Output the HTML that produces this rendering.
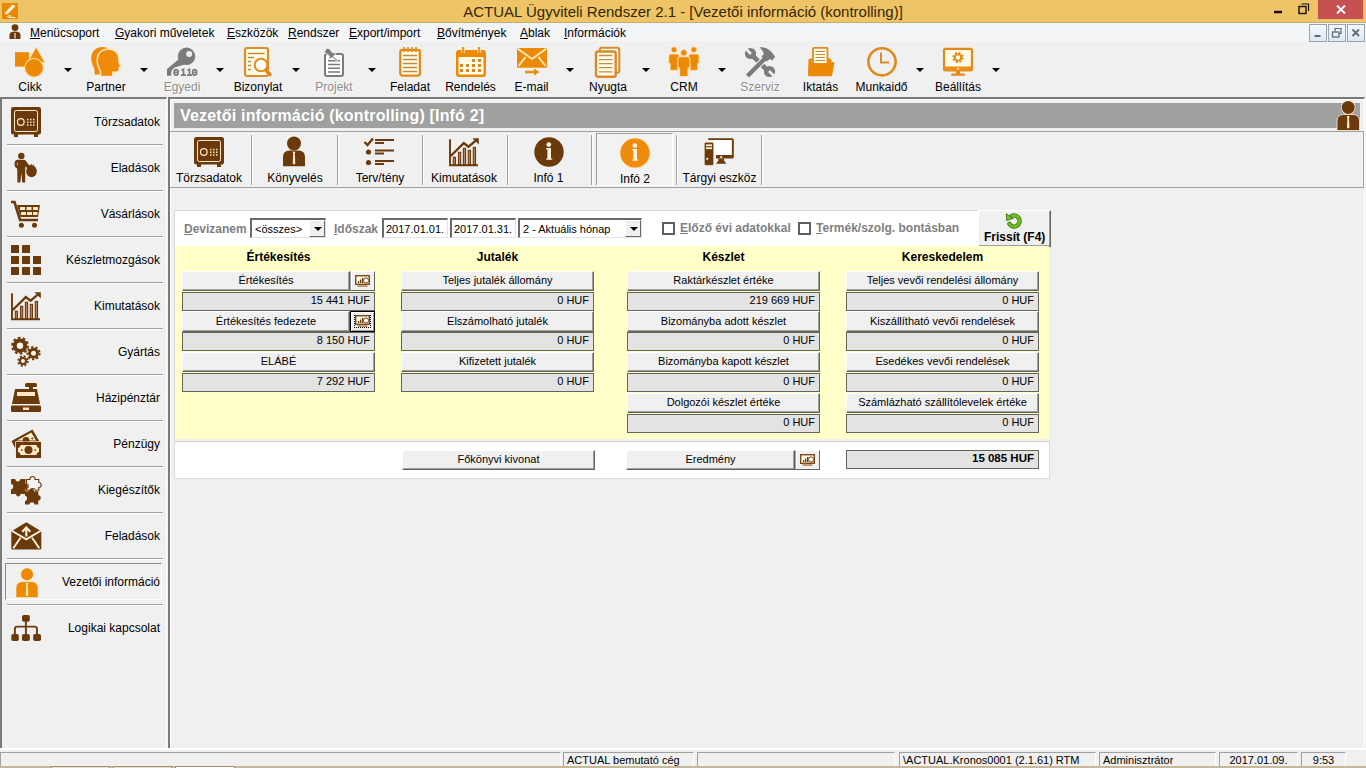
<!DOCTYPE html>
<html><head><meta charset="utf-8">
<style>
*{margin:0;padding:0;box-sizing:border-box}
html,body{width:1366px;height:768px;overflow:hidden;background:#f0f0f0;font-family:"Liberation Sans",sans-serif;color:#000}
.a{position:absolute}
#title{left:0;top:0;width:1366px;height:22px;background:#efc466}
#ttext{left:0;top:3px;width:1366px;text-align:center;font-size:15px;color:#33260a;white-space:nowrap}
#menubar{left:0;top:22px;width:1366px;height:20px;background:linear-gradient(#f1f4f6,#f5f6f7);border-top:1px solid #c4ad72;border-bottom:1px solid #e4e5e7}
.mi{top:26px;font-size:12px;white-space:nowrap}
.mi u{text-decoration:underline}
#toolbar{left:0;top:41px;width:1366px;height:56px;background:#f0f0f0}
.tl{top:80px;font-size:12px;white-space:nowrap;text-align:center}
.dd{width:0;height:0;border-left:4px solid transparent;border-right:4px solid transparent;border-top:4px solid #000}
#side{left:0;top:97px;width:167px;height:651px;background:#f0f0f0;border-top:2px solid #7a7a7a;border-left:2px solid #7a7a7a;border-right:1px solid #fff}
.sl{font-size:12px;white-space:nowrap;text-align:right}
.sep{height:2px;background:#a0a0a0;border-bottom:1px solid #fff}
#mdi{left:168px;top:97px;width:1197px;border-right:1px solid #fff;height:651px;background:#f0f0f0;border-top:2px solid #7a7a7a;border-left:2px solid #7a7a7a}
#status{left:0;top:750px;width:1366px;height:18px;background:#f0f0f0}
.sp{top:752px;height:16px;border:1px solid #a0a0a0;border-right-color:#fff;border-bottom-color:#fff;font-size:11px;white-space:nowrap;padding-left:3px;line-height:15px}
.flab{font-size:12px;font-weight:bold;color:#7f7f7f;white-space:nowrap}
.combo{background:#fff;border-top:2px solid #696969;border-left:2px solid #696969;border-right:1px solid #e3e3e3;border-bottom:1px solid #e3e3e3;font-size:11px;white-space:nowrap;overflow:hidden}
.cbtn{position:absolute;right:0;top:0;width:16px;height:17px;background:#f0f0f0;border-right:1px solid #696969;border-bottom:1px solid #696969;border-top:1px solid #fff;border-left:1px solid #fff}
.chk{width:13px;height:13px;border:2px solid #5e5e5e;background:#fff}
.fhd{font-size:12px;font-weight:bold;text-align:center;white-space:nowrap}
.btn{height:20px;background:#f0f0f0;border-top:1px solid #fff;border-left:1px solid #fff;border-right:1px solid #646458;border-bottom:1px solid #646458;box-shadow:inset -1px -1px 0 #a0a0a0;font-size:11px;text-align:center;line-height:17px;white-space:nowrap}
.cbt{border-left:1px solid #a0a0a0;box-shadow:inset 1px 0 0 #fff}
.sel{border:1px solid #000;box-shadow:inset 1px 1px 0 #fff,inset -1px -1px 0 #a0a0a0}
.fld{height:19px;background:#e3e3e3;border:1px solid #646458;font-size:11px;text-align:right;padding-right:4px;line-height:15px;white-space:nowrap}
.mdib{z-index:5;width:18px;height:18px;border:1px solid #9aa4ae;background:linear-gradient(#f4f8fc,#dde8f4)}
.br{color:#6e3c0c}
</style></head><body>
<!-- title bar -->
<div class="a" id="title"></div>
<div class="a" id="ttext">ACTUAL Ügyviteli Rendszer 2.1 - [Vezetői információ (kontrolling)]</div>
<div class="a" style="left:1318px;top:0;width:45px;height:19px;background:#c75050"></div>

<!-- menu bar -->
<svg class="a" style="left:2px;top:3px" width="16" height="16" viewBox="0 0 16 16">
 <rect width="16" height="16" fill="#e98806"/>
 <path d="M2.3 10.6 L10.5 1.5 L12.8 2.5 L13 3.8 L5 11.5Z" fill="#fff6d8"/>
 <path d="M5 13.8 Q8 11.5 9 13 Q8.5 14.5 6.5 14 M6.5 14.5 H13.5" fill="none" stroke="#fff0c0" stroke-width="1"/>
</svg>
<svg class="a" style="left:1274px;top:10px" width="9" height="4"><rect width="8" height="2.5" y="0.8" fill="#111"/></svg>
<svg class="a" style="left:1298px;top:3px" width="12" height="12" viewBox="0 0 12 12"><path d="M3.5 1 H10.5 V8" fill="none" stroke="#111" stroke-width="1.2"/><rect x="1" y="3.5" width="7" height="7" fill="none" stroke="#111" stroke-width="1.4"/></svg>
<svg class="a" style="left:1336px;top:5px" width="10" height="9" viewBox="0 0 10 9"><path d="M1 0.5 L9 8.5 M9 0.5 L1 8.5" stroke="#fff" stroke-width="1.9"/></svg>

<div class="a" id="menubar"></div>
<svg class="a" style="left:9px;top:24px" width="12" height="16" viewBox="0 0 12 16">
 <circle cx="6" cy="3.6" r="3.4" fill="#6b3a0c"/>
 <path d="M0.5 15 V11 C0.5 8.5 2.5 7.5 6 7.5 C9.5 7.5 11.5 8.5 11.5 11 V15Z" fill="#6b3a0c"/>
 <rect x="5.4" y="9" width="1.2" height="5.5" fill="#f5e8d0"/>
</svg>
<div class="a mdib" style="left:1309px;top:24px"><svg width="16" height="16" style="position:absolute;left:0;top:0"><rect x="4.5" y="10" width="6" height="2" fill="#5f6b78"/></svg></div>
<div class="a mdib" style="left:1328px;top:24px"><svg width="16" height="16" style="position:absolute;left:0;top:0"><path d="M6 6.5 V3.5 H12 V8.5 H10" fill="none" stroke="#5f6b78" stroke-width="1.2"/><rect x="3.5" y="7" width="6.5" height="5" fill="none" stroke="#5f6b78" stroke-width="1.3"/></svg></div>
<div class="a mdib" style="left:1347px;top:24px"><svg width="16" height="16" style="position:absolute;left:0;top:0"><path d="M4.5 4.5 L11 11 M11 4.5 L4.5 11" stroke="#5f6b78" stroke-width="1.8"/></svg></div>
<div class="a mi" style="left:30px"><u>M</u>enücsoport</div>
<div class="a mi" style="left:115px"><u>G</u>yakori műveletek</div>
<div class="a mi" style="left:227px"><u>E</u>szközök</div>
<div class="a mi" style="left:288px"><u>R</u>endszer</div>
<div class="a mi" style="left:349px"><u>E</u>xport/import</div>
<div class="a mi" style="left:437px"><u>B</u>ővítmények</div>
<div class="a mi" style="left:520px"><u>A</u>blak</div>
<div class="a mi" style="left:564px"><u>I</u>nformációk</div>

<!-- toolbar -->
<div class="a" id="toolbar"></div>


<!-- toolbar icons -->
<svg class="a" style="left:15px;top:47px;overflow:visible" width="30" height="30" viewBox="0 0 30 30">
 <rect x="0" y="5.2" width="14" height="14.5" fill="#ec8a08"/>
 <path d="M21 0 L30 15.5 L11.5 17.5 Z" fill="#ec8a08" stroke="#ffe3a6" stroke-width="1"/>
 <circle cx="19" cy="20.9" r="9.8" fill="#ffe3a6"/>
 <circle cx="19" cy="20.9" r="8.8" fill="#ec8a08"/>
</svg>
<div class="a dd" style="left:64px;top:68px"></div>
<div class="a tl" style="left:0;width:60px">Cikk</div>

<svg class="a" style="left:91px;top:47px;overflow:visible" width="31" height="31" viewBox="0 0 31 31">
 <path d="M9.5 29.6 L9.5 24 C7.5 21 6.2 17 6.2 12.5 C6.5 6 11 1.9 17.5 1.9 C24 1.9 28 6.5 28 12 C28 14 27.8 15.5 28.3 16.5 L29.9 19 L28.3 20.3 L28.3 22.5 C28 24.5 27 25.2 24.5 25.2 L21.7 25.2 L21.7 29.6 Z" fill="#ef8a0c" transform="translate(-6,-2)"/>
 <path d="M9.5 29.6 L9.5 24 C7.5 21 6.2 17 6.2 12.5 C6.5 6 11 1.9 17.5 1.9 C24 1.9 28 6.5 28 12 C28 14 27.8 15.5 28.3 16.5 L29.9 19 L28.3 20.3 L28.3 22.5 C28 24.5 27 25.2 24.5 25.2 L21.7 25.2 L21.7 29.6 Z" fill="#ef8a0c" stroke="#ffe8b8" stroke-width="1.5"/>
 <path d="M9 29.6 H22.5 V31 H9Z" fill="#f0f0f0"/>
</svg>
<div class="a dd" style="left:140px;top:68px"></div>
<div class="a tl" style="left:76px;width:60px">Partner</div>

<svg class="a" style="left:164px;top:44px" width="40" height="36" viewBox="0 0 40 36">
 <circle cx="22.5" cy="12.3" r="8.7" fill="#7b7b7b"/>
 <circle cx="25.2" cy="9.9" r="3" fill="#f0f0f0"/>
 <path d="M15 15 L3 25 L3 31.8 L7 31.8 L7.5 26.5 L10.5 23.5 L20.5 20.5Z" fill="#7b7b7b"/>
 <g fill="none" stroke="#7b7b7b" stroke-width="1.7">
  <rect x="10.2" y="25.7" width="3.8" height="5.4" rx="1.9"/>
  <rect x="28.7" y="25.7" width="3.8" height="5.4" rx="1.9"/>
  <path d="M11 28.4 H13.2 M29.5 28.4 H31.7"/>
  <path d="M17.5 26.2 L19.5 25.3 V31.8 M17 31.2 H22 M23.5 26.2 L25.5 25.3 V31.8 M23 31.2 H28"/>
 </g>
</svg>
<div class="a dd" style="left:216px;top:68px"></div>
<div class="a tl" style="left:152px;width:60px;color:#8d8d8d;text-shadow:1px 1px 0 #fff">Egyedi</div>

<svg class="a" style="left:243px;top:46px" width="30" height="31" viewBox="0 0 30 31">
 <rect x="2" y="2" width="23" height="28" rx="2" fill="#fffbe6" stroke="#d9902c" stroke-width="2.2"/>
 <path d="M5 7.5 H21.5 M5 11.5 H11 M5 15.5 H8 M5 19.5 H8 M5 23.5 H8" stroke="#c08a3a" stroke-width="1.5"/>
 <circle cx="18" cy="19" r="6.3" fill="#fffef8" stroke="#e08d20" stroke-width="2"/>
 <path d="M22 23.5 L28 29.5" stroke="#e8870e" stroke-width="3.2"/>
</svg>
<div class="a dd" style="left:292px;top:68px"></div>
<div class="a tl" style="left:228px;width:60px">Bizonylat</div>

<svg class="a" style="left:319px;top:47px" width="30" height="30" viewBox="0 0 30 30">
 <rect x="6" y="7" width="18" height="22" rx="2" fill="#fff" stroke="#7b7b7b" stroke-width="2"/>
 <path d="M9 13.8 H21 M9 17.5 H21 M9 21.3 H21 M9 25 H21" stroke="#7b7b7b" stroke-width="1.4"/>
 <path d="M5 5 L8 1 L10.5 2 L14 6 L17.5 5.5 L14.5 9.5 L19 13 L17.5 14 L13.5 10.5 L10 12.5 L10.5 9 L6.5 6Z" fill="#7b7b7b" stroke="#f0f0f0" stroke-width="0.9"/>
</svg>
<div class="a dd" style="left:368px;top:68px"></div>
<div class="a tl" style="left:304px;width:60px;color:#8d8d8d;text-shadow:1px 1px 0 #fff">Projekt</div>

<svg class="a" style="left:398px;top:46px" width="24" height="31" viewBox="0 0 24 31">
 <rect x="2.3" y="4" width="19.6" height="25.6" rx="2" fill="#fffbe6" stroke="#e08a1c" stroke-width="2.3"/>
 <path d="M6 1 V6 M10 1 V6 M14 1 V6 M18 1 V6" stroke="#e8901a" stroke-width="1.6"/>
 <path d="M5 9.5 H19 M5 13.5 H19 M5 17.5 H19 M5 21.5 H19 M5 25.5 H19" stroke="#c48a3e" stroke-width="1.4"/>
</svg>
<div class="a tl" style="left:380px;width:60px">Feladat</div>

<svg class="a" style="left:456px;top:47px" width="30" height="30" viewBox="0 0 30 30">
 <rect x="0" y="3" width="30" height="27" rx="3" fill="#ec8a08"/>
 <rect x="2.5" y="10" width="25" height="17.5" rx="1" fill="#fffbe6"/>
 <path d="M7 0 V6 M23 0 V6" stroke="#ffe3b0" stroke-width="3.6"/>
 <path d="M7 0 V6 M23 0 V6" stroke="#e8901a" stroke-width="1.8"/>
 <g fill="#d88a2a"><rect x="16" y="12" width="3" height="3"/><rect x="22" y="12" width="3" height="3"/>
 <rect x="4" y="17" width="3" height="3"/><rect x="10" y="17" width="3" height="3"/><rect x="16" y="17" width="3" height="3"/><rect x="22" y="17" width="3" height="3"/>
 <rect x="4" y="22" width="3" height="3"/><rect x="10" y="22" width="3" height="3"/><rect x="16" y="22" width="3" height="3"/><rect x="22" y="22" width="3" height="3"/></g>
</svg>
<div class="a tl" style="left:440px;width:61px">Rendelés</div>

<svg class="a" style="left:516px;top:47px" width="32" height="30" viewBox="0 0 32 30">
 <rect x="1" y="1" width="30" height="19.7" rx="1.2" fill="#ec8a08"/>
 <path d="M1.8 1.8 L16 12 L30.2 1.8 M2.5 19 L9.5 10 M29.5 19 L22.5 10" stroke="#fff0c8" stroke-width="1.7" fill="none"/>
 <path d="M9 25 H19" stroke="#e8901a" stroke-width="2.6"/>
 <path d="M18 21.5 L23.5 25 L18 28.5Z" fill="#e8901a"/>
</svg>
<div class="a dd" style="left:566px;top:68px"></div>
<div class="a tl" style="left:501px;width:61px">E-mail</div>

<svg class="a" style="left:594px;top:46px" width="28" height="32" viewBox="0 0 28 32">
 <rect x="5.8" y="1.8" width="19.5" height="25" rx="2" fill="#fffbe6" stroke="#d98a2c" stroke-width="2"/>
 <rect x="2" y="5.5" width="19.7" height="25.3" rx="2" fill="#fffbe6" stroke="#d98a2c" stroke-width="2.4"/>
 <path d="M5 9.5 H18.5 M5 13.7 H18.5 M5 17.7 H18.5 M5 21.7 H18.5 M5 25.8 H18.5" stroke="#c0904a" stroke-width="1.3"/>
</svg>
<div class="a dd" style="left:642px;top:68px"></div>
<div class="a tl" style="left:578px;width:60px">Nyugta</div>

<svg class="a" style="left:668px;top:46px;overflow:visible" width="32" height="32" viewBox="0 0 32 32">
 <g fill="#ec8a08" stroke="#ffe3b0" stroke-width="0.8">
 <circle cx="6" cy="3.7" r="2.9"/><circle cx="25.8" cy="3.7" r="2.9"/>
 <path d="M0.8 10 Q0.8 8 3 8 H9 Q11.2 8 11.2 10 V17.5 H9.8 V24.3 H2.2 V17.5 H0.8Z"/>
 <path d="M20.6 10 Q20.6 8 22.8 8 H28.8 Q31 8 31 10 V17.5 H29.6 V24.3 H22 V17.5 H20.6Z"/>
 <circle cx="15.8" cy="6.8" r="3.2"/>
 <path d="M9.8 12.8 Q9.8 10.7 12 10.7 H19.6 Q21.8 10.7 21.8 12.8 V22 H20 V30.5 H11.6 V22 H9.8Z" stroke-width="1.1"/>
 </g>
</svg>
<div class="a dd" style="left:718px;top:68px"></div>
<div class="a tl" style="left:654px;width:60px">CRM</div>

<svg class="a" style="left:740px;top:44px" width="40" height="36" viewBox="0 0 40 36">
 <g fill="#7b7b7b"><circle cx="10.5" cy="9.5" r="5.6"/><circle cx="29.5" cy="27.5" r="5.6"/></g>
 <path d="M11 10 L29 28" stroke="#7b7b7b" stroke-width="4.6"/>
 <path d="M4 3 L11 10 M36 34 L29 27" stroke="#f0f0f0" stroke-width="2.6"/>
 <path d="M7.5 32 L26 13.5" stroke="#f0f0f0" stroke-width="6.4"/>
 <path d="M7.5 32 L26 13.5" stroke="#7b7b7b" stroke-width="4.4"/>
 <path d="M19.5 3.3 C25 2.5 30.5 5.5 33.5 10.5 L35 12.5 L34 14.5 L32 16.5 L30 15 L26.5 17.5 L21.5 12.5 L24 10 C23 7.5 21.5 5 19.5 3.3Z" fill="#7b7b7b"/>
</svg>
<div class="a tl" style="left:730px;width:60px;color:#8d8d8d;text-shadow:1px 1px 0 #fff">Szerviz</div>

<svg class="a" style="left:807px;top:46px" width="28" height="32" viewBox="0 0 28 32">
 <rect x="6" y="1.8" width="14.5" height="16" rx="1" fill="#fffbe6" stroke="#e08a1c" stroke-width="1.8"/>
 <path d="M8.5 5.5 H18 M8.5 8.5 H18 M8.5 11.5 H18 M8.5 14.5 H18" stroke="#c48a3e" stroke-width="1.2"/>
 <path d="M1.5 14 Q1.5 12.5 3 12.5 H5 V17 H21 V12.5 H23 Q24.5 12.5 24.5 14 V16 H26.5 Q27.5 16 27.3 17.5 L25.3 28.8 Q25 30.3 23.5 30.3 H2.5 Q1 30.3 1 28.8Z" fill="#ec8a08"/>
</svg>
<div class="a tl" style="left:790px;width:61px">Iktatás</div>

<svg class="a" style="left:866px;top:46px" width="32" height="32" viewBox="0 0 32 32">
 <circle cx="16" cy="15.8" r="13.6" fill="none" stroke="#e08a1c" stroke-width="2.6"/>
 <path d="M15 6.5 V16.5 H23" stroke="#d98a2c" stroke-width="2" fill="none"/>
</svg>
<div class="a dd" style="left:916px;top:68px"></div>
<div class="a tl" style="left:851px;width:61px">Munkaidő</div>

<svg class="a" style="left:942px;top:47px" width="32" height="30" viewBox="0 0 32 30">
 <rect x="2" y="1.8" width="28" height="21.5" rx="1.5" fill="#fffbe6" stroke="#e08a1c" stroke-width="2.2"/>
 <rect x="1" y="19.5" width="30" height="4.5" rx="1" fill="#e8901a"/>
 <rect x="15" y="21" width="2" height="1.3" fill="#fffbe6"/>
 <rect x="14" y="24" width="4" height="3" fill="#e08a1c"/>
 <rect x="9" y="26.5" width="14" height="2.2" rx="1" fill="#e08a1c"/>
 <circle cx="16" cy="10.5" r="4.3" fill="none" stroke="#e08a1c" stroke-width="2.6" stroke-dasharray="1.9 1.48"/>
 <circle cx="16" cy="10.5" r="3.1" fill="none" stroke="#e08a1c" stroke-width="1.7"/>
</svg>
<div class="a dd" style="left:992px;top:68px"></div>
<div class="a tl" style="left:928px;width:60px">Beállítás</div>

<!-- sidebar -->
<div class="a" id="side"></div>


<!-- sidebar items -->
<div class="a" style="left:5px;top:563px;width:157px;height:37px;border-top:1px solid #8a8a8a;border-left:1px solid #8a8a8a;border-right:1px solid #fff;border-bottom:1px solid #fff;background:repeating-conic-gradient(#f7f7f7 0 25%,#ebebeb 0 50%) 0 0/2px 2px"></div>
<svg class="a" style="left:11px;top:107px;overflow:visible" width="31" height="31" viewBox="0 0 31 31"><rect x="0" y="0" width="30" height="27.5" rx="2.2" fill="#6b3a0c"/><rect x="3.5" y="3.5" width="23" height="21" rx="1.8" fill="none" stroke="#ffe9c8" stroke-width="1"/>
<circle cx="9.8" cy="15" r="3.3" fill="none" stroke="#ffe9c8" stroke-width="1.2"/>
<g fill="#ffe9c8"><rect x="16" y="11.8" width="1.5" height="1.5"/><rect x="19" y="11.8" width="1.5" height="1.5"/><rect x="22" y="11.8" width="1.5" height="1.5"/><rect x="16" y="14.5" width="1.5" height="1.5"/><rect x="19" y="14.5" width="1.5" height="1.5"/><rect x="22" y="14.5" width="1.5" height="1.5"/><rect x="16" y="17.2" width="1.5" height="1.5"/><rect x="19" y="17.2" width="1.5" height="1.5"/><rect x="22" y="17.2" width="1.5" height="1.5"/></g>
<rect x="3" y="27" width="4" height="3" fill="#6b3a0c"/><rect x="23" y="27" width="4" height="3" fill="#6b3a0c"/></svg>
<div class="a sl" style="right:1206px;top:115px">Törzsadatok</div>
<div class="a sep" style="left:7px;top:144px;width:156px"></div>
<svg class="a" style="left:11px;top:153px;overflow:visible" width="31" height="31" viewBox="0 0 31 31"><circle cx="10.3" cy="2.9" r="3.2" fill="#6b3a0c"/>
<path d="M6.5 6.8 Q3.8 7 3.6 10 L3.6 12.5 Q3.8 14.3 6.2 15.8 L6.4 29.6 H9.4 L10.3 19.5 L11.2 29.6 H14.2 L14.3 13.5 L17 15.5 L18.8 13.5 L15 8 Q14 6.8 12.5 6.8Z" fill="#6b3a0c"/>
<path d="M5.6 10.3 L6.6 10 L6.6 13.2Z" fill="#f0f0f0"/>
<ellipse cx="20.5" cy="18.3" rx="5.3" ry="6" fill="#6b3a0c"/>
<path d="M17.8 10.8 L19 13 L20.3 10.8 L21.5 13 L23 10.8 L22.5 14 H18.3Z" fill="#6b3a0c"/></svg>
<div class="a sl" style="right:1206px;top:161px">Eladások</div>
<div class="a sep" style="left:7px;top:190px;width:156px"></div>
<svg class="a" style="left:11px;top:199px;overflow:visible" width="31" height="31" viewBox="0 0 31 31"><path d="M0 3 H3.5 L9 21 H27" fill="none" stroke="#6b3a0c" stroke-width="2.6"/>
<path d="M6 6 H29 L27 18 H9.5Z" fill="#6b3a0c"/>
<g fill="#ffe9c8"><rect x="9" y="8" width="5" height="3"/><rect x="15.5" y="8" width="5" height="3"/><rect x="22" y="8" width="5" height="3"/><rect x="10" y="13" width="5" height="3"/><rect x="16" y="13" width="5" height="3"/><rect x="22" y="13" width="4.5" height="3"/></g>
<circle cx="10.4" cy="26.3" r="2.5" fill="#6b3a0c"/><circle cx="23.5" cy="26.3" r="2.5" fill="#6b3a0c"/></svg>
<div class="a sl" style="right:1206px;top:207px">Vásárlások</div>
<div class="a sep" style="left:7px;top:236px;width:156px"></div>
<svg class="a" style="left:11px;top:245px;overflow:visible" width="31" height="31" viewBox="0 0 31 31"><g fill="#6b3a0c"><rect x="0" y="0" width="8" height="8" rx="0.5"/><rect x="11" y="0" width="8" height="8" rx="0.5"/>
<rect x="0" y="11" width="8" height="8" rx="0.5"/><rect x="11" y="11" width="8" height="8" rx="0.5"/><rect x="22" y="11" width="8" height="8" rx="0.5"/>
<rect x="0" y="22" width="8" height="8" rx="0.5"/><rect x="11" y="22" width="8" height="8" rx="0.5"/><rect x="22" y="22" width="8" height="8" rx="0.5"/></g></svg>
<div class="a sl" style="right:1206px;top:253px">Készletmozgások</div>
<div class="a sep" style="left:7px;top:282px;width:156px"></div>
<svg class="a" style="left:11px;top:292px;overflow:visible" width="31" height="31" viewBox="0 0 31 31"><path d="M1 1.2 V27.2 H29" fill="none" stroke="#6b3a0c" stroke-width="1.9"/>
<path d="M1.7 18 L14.8 5.1 L19.5 8.7 L26.5 2.8" fill="none" stroke="#6b3a0c" stroke-width="2.3"/>
<path d="M23.5 0.2 H29.8 V6.5Z" fill="#6b3a0c"/><rect x="4.3" y="19.2" width="2.2" height="7.4" fill="#b08a64" stroke="#6b3a0c" stroke-width="1.1"/><rect x="9.5" y="14.3" width="2.2" height="12.3" fill="#b08a64" stroke="#6b3a0c" stroke-width="1.1"/><rect x="14.4" y="10.3" width="2.2" height="16.3" fill="#b08a64" stroke="#6b3a0c" stroke-width="1.1"/><rect x="19.3" y="12.4" width="2.2" height="14.2" fill="#b08a64" stroke="#6b3a0c" stroke-width="1.1"/><rect x="24.3" y="9.4" width="2.2" height="17.2" fill="#b08a64" stroke="#6b3a0c" stroke-width="1.1"/></svg>
<div class="a sl" style="right:1206px;top:299px">Kimutatások</div>
<div class="a sep" style="left:7px;top:328px;width:156px"></div>
<svg class="a" style="left:11px;top:337px;overflow:visible" width="31" height="31" viewBox="0 0 31 31"><circle cx="9" cy="8.7" r="7.2" fill="#6b3a0c"/><circle cx="9" cy="8.7" r="7.90" fill="none" stroke="#6b3a0c" stroke-width="2" stroke-dasharray="2.730 2.234"/><circle cx="9" cy="8.7" r="3.2" fill="#f4f0ea"/><circle cx="22.5" cy="16.2" r="5.3999999999999995" fill="#6b3a0c"/><circle cx="22.5" cy="16.2" r="6.10" fill="none" stroke="#6b3a0c" stroke-width="2" stroke-dasharray="2.342 1.916"/><circle cx="22.5" cy="16.2" r="2.5" fill="#f4f0ea"/><circle cx="12" cy="24" r="4.0" fill="#6b3a0c"/><circle cx="12" cy="24" r="4.70" fill="none" stroke="#6b3a0c" stroke-width="2" stroke-dasharray="2.030 1.661"/><circle cx="12" cy="24" r="2" fill="#f4f0ea"/></svg>
<div class="a sl" style="right:1206px;top:345px">Gyártás</div>
<div class="a sep" style="left:7px;top:374px;width:156px"></div>
<svg class="a" style="left:11px;top:383px;overflow:visible" width="31" height="31" viewBox="0 0 31 31"><rect x="14" y="0" width="12" height="4" rx="1.5" fill="#6b3a0c"/><rect x="18" y="3" width="4" height="3" fill="#6b3a0c"/>
<path d="M4 6 H26 L29 21 H1Z" fill="#6b3a0c"/><rect x="6" y="9" width="18" height="4" fill="#ffe9c8"/>
<rect x="0" y="22.5" width="30" height="6.5" rx="1" fill="#6b3a0c"/><rect x="12" y="24.5" width="6" height="2.5" fill="#ffe9c8"/></svg>
<div class="a sl" style="right:1206px;top:391px">Házipénztár</div>
<div class="a sep" style="left:7px;top:420px;width:156px"></div>
<svg class="a" style="left:11px;top:429px;overflow:visible" width="31" height="31" viewBox="0 0 31 31"><path d="M0.5 12 L21.5 0.5 L28.5 12.5 L4.5 12.5 L4.5 20Z" fill="#6b3a0c"/><path d="M6 11.5 L20.3 3.6 L25 11.5Z" fill="#ffe9c8"/><circle cx="15" cy="11.5" r="3.4" fill="#6b3a0c"/><circle cx="21.3" cy="9.5" r="1" fill="#6b3a0c"/>
<rect x="4.5" y="12.5" width="26" height="16.5" fill="#ffe9c8"/>
<rect x="5" y="13" width="25" height="16" fill="#6b3a0c"/>
<path d="M9.5 16 H25.5 C25.5 18 27 19 28 19 V23 C27 23 25.5 24 25.5 26 H9.5 C9.5 24 8 23 7 23 V19 C8 19 9.5 18 9.5 16Z" fill="#ffe9c8"/>
<circle cx="17.5" cy="21" r="4" fill="#6b3a0c"/><rect x="10" y="20.3" width="1.5" height="1.5" fill="#6b3a0c"/><rect x="23.5" y="20.3" width="1.5" height="1.5" fill="#6b3a0c"/></svg>
<div class="a sl" style="right:1206px;top:437px">Pénzügy</div>
<div class="a sep" style="left:7px;top:466px;width:156px"></div>
<svg class="a" style="left:11px;top:475px;overflow:visible" width="31" height="31" viewBox="0 0 31 31"><path d="M0 4 H4.3 C4.3 7.3 9.3 7.3 9.3 4 H14.5 V9 C17.3 9 17.3 14 14.5 14 V19 H9.5 C9.5 22.3 5 22.3 5 19 H0 V14.2 C3 14.2 3 9 0 9Z" fill="#6b3a0c"/>
<path d="M15.5 4.5 H19 C18.5 0.5 24.5 0.5 24 4.5 H27.8 V7.5 C31 7.5 31 12.5 27.8 12.5 V15.2 H24.5 C24 13 19.5 13 19 15.2 H15.5 V13.5 C17.8 13.5 17.8 9 15.5 9Z" fill="#f4f4f4" stroke="#6b3a0c" stroke-width="1.1"/>
<path d="M14 16.3 H18 C17.5 12.8 23.5 12.8 23 16.3 H27.3 V20.3 C30.6 20.3 30.6 25.5 27.3 25.5 V29.6 H23.5 C23.5 26.6 18.5 26.6 18.5 29.6 H14 V26 C16.8 26 16.8 20.8 14 20.8Z" fill="#6b3a0c"/></svg>
<div class="a sl" style="right:1206px;top:483px">Kiegészítők</div>
<div class="a sep" style="left:7px;top:512px;width:156px"></div>
<svg class="a" style="left:11px;top:522px;overflow:visible" width="31" height="31" viewBox="0 0 31 31"><path d="M0.3 9.3 L15.3 0.3 L30.3 9.3 V26.3 Q30.3 27.5 29.1 27.5 H1.5 Q0.3 27.5 0.3 26.3Z" fill="#6b3a0c"/>
<path d="M0.8 8.8 L15.3 17.3 L29.8 8.8 M2.3 26.3 L9.5 15.8 M28.3 26.3 L21.1 15.8" fill="none" stroke="#fff3dc" stroke-width="1.9"/>
<path d="M15.3 14.5 V6 M11.3 9.8 L15.3 5.5 L19.3 9.8" fill="none" stroke="#fff3dc" stroke-width="2.1"/></svg>
<div class="a sl" style="right:1206px;top:529px">Feladások</div>
<svg class="a" style="left:11px;top:568px;overflow:visible" width="31" height="31" viewBox="0 0 31 31"><circle cx="16" cy="6.3" r="6.6" fill="#ffe3b0"/><circle cx="16" cy="6.3" r="6" fill="#ec8a08"/>
<path d="M5 29.5 V20.5 Q5 13.7 11.5 13.7 H20.5 Q27 13.7 27 20.5 V29.5Z" fill="#ec8a08" stroke="#ffe3b0" stroke-width="0.7"/>
<path d="M14.6 15 H17.4 L16.8 17 L17.3 27 L16 28.3 L14.7 27 L15.2 17Z" fill="#ffe9a0"/></svg>
<div class="a sl" style="right:1206px;top:575px">Vezetői információ</div>
<svg class="a" style="left:11px;top:615px;overflow:visible" width="31" height="31" viewBox="0 0 31 31"><rect x="11" y="0" width="7.8" height="6.8" rx="1.8" fill="#6b3a0c"/>
<path d="M14.9 5 V19.5 M3.9 20 V14 Q3.9 11.6 6.3 11.6 H23.6 Q26 11.6 26 14 V20" fill="none" stroke="#6b3a0c" stroke-width="1.9"/>
<rect x="0.3" y="19" width="7.5" height="7" rx="1.8" fill="#6b3a0c"/><rect x="11" y="19" width="7.8" height="7" rx="1.8" fill="#6b3a0c"/><rect x="22.2" y="19" width="7.8" height="7" rx="1.8" fill="#6b3a0c"/></svg>
<div class="a sl" style="right:1206px;top:621px">Logikai kapcsolat</div>
<div class="a sep" style="left:7px;top:558px;width:156px"></div>
<div class="a sep" style="left:7px;top:604px;width:156px"></div>

<!-- MDI -->
<div class="a" id="mdi"></div>


<!-- MDI child -->
<div class="a" style="left:170px;top:99px;width:1194px;height:649px;background:#f0f0f0;border-top:1px solid #fff;border-left:1px solid #fff"></div>
<div class="a" style="left:174px;top:103px;width:1186px;height:25px;background:#a0a0a0"></div>
<div class="a" style="left:180px;top:107px;font-size:16px;font-weight:bold;color:#fff;white-space:nowrap;letter-spacing:0.18px">Vezetői információ (kontrolling) [Infó 2]</div>
<svg class="a" style="left:1335px;top:99px" width="26" height="33" viewBox="0 0 26 33">
 <circle cx="13.2" cy="8.4" r="7.2" fill="#fff0dc"/>
 <circle cx="13.2" cy="8.4" r="6.5" fill="#6b3a0c"/>
 <path d="M2 31.5 V22.5 Q2 15.5 8.5 15.5 H18 Q24.5 15.5 24.5 22.5 V31.5Z" fill="#6b3a0c" stroke="#fff0dc" stroke-width="0.8"/>
 <path d="M11.8 17 H14.6 L14 19 L14.5 28.5 L13.2 29.8 L11.9 28.5 L12.4 19Z" fill="#ffe9c8"/>
</svg>
<!-- tab toolbar frame -->
<div class="a" style="left:170px;top:131px;width:1194px;height:57px;border-top:1px solid #a0a0a0;border-bottom:1px solid #a0a0a0;border-right:1px solid #a0a0a0"></div>
<div class="a" style="left:251px;top:135px;width:1px;height:50px;background:#a0a0a0;box-shadow:1px 0 0 #fff"></div>
<div class="a" style="left:337px;top:135px;width:1px;height:50px;background:#a0a0a0;box-shadow:1px 0 0 #fff"></div>
<div class="a" style="left:422px;top:135px;width:1px;height:50px;background:#a0a0a0;box-shadow:1px 0 0 #fff"></div>
<div class="a" style="left:507px;top:135px;width:1px;height:50px;background:#a0a0a0;box-shadow:1px 0 0 #fff"></div>
<div class="a" style="left:591px;top:135px;width:1px;height:50px;background:#a0a0a0;box-shadow:1px 0 0 #fff"></div>
<div class="a" style="left:676px;top:135px;width:1px;height:50px;background:#a0a0a0;box-shadow:1px 0 0 #fff"></div>
<div class="a" style="left:761px;top:135px;width:1px;height:50px;background:#a0a0a0;box-shadow:1px 0 0 #fff"></div>
<div class="a" style="left:596px;top:133px;width:77px;height:53px;background:repeating-conic-gradient(#f8f8f8 0 25%,#ececec 0 50%) 0 0/2px 2px;border-top:1px solid #a0a0a0;border-left:1px solid #a0a0a0;border-right:1px solid #fff;border-bottom:1px solid #fff"></div>
<div class="a tl" style="left:164px;width:90px;top:171px">Törzsadatok</div>
<div class="a tl" style="left:250px;width:90px;top:171px">Könyvelés</div>
<div class="a tl" style="left:335px;width:90px;top:171px">Terv/tény</div>
<div class="a tl" style="left:419px;width:90px;top:171px">Kimutatások</div>
<div class="a tl" style="left:503.5px;width:90px;top:171px">Infó 1</div>
<div class="a tl" style="left:590px;width:90px;top:172px">Infó 2</div>
<div class="a tl" style="left:674.5px;width:90px;top:171px">Tárgyi eszköz</div>
<svg class="a" style="left:194px;top:137px" width="31" height="31" viewBox="0 0 31 31">
<rect x="0" y="0" width="30" height="27.5" rx="2.2" fill="#6b3a0c"/><rect x="3.5" y="3.5" width="23" height="21" rx="1.8" fill="none" stroke="#ffe9c8" stroke-width="1"/>
<circle cx="9.8" cy="15" r="3.3" fill="none" stroke="#ffe9c8" stroke-width="1.2"/>
<g fill="#ffe9c8"><rect x="16" y="11.8" width="1.5" height="1.5"/><rect x="19" y="11.8" width="1.5" height="1.5"/><rect x="22" y="11.8" width="1.5" height="1.5"/><rect x="16" y="14.5" width="1.5" height="1.5"/><rect x="19" y="14.5" width="1.5" height="1.5"/><rect x="22" y="14.5" width="1.5" height="1.5"/><rect x="16" y="17.2" width="1.5" height="1.5"/><rect x="19" y="17.2" width="1.5" height="1.5"/><rect x="22" y="17.2" width="1.5" height="1.5"/></g>
<rect x="3" y="27" width="4" height="3" fill="#6b3a0c"/><rect x="23" y="27" width="4" height="3" fill="#6b3a0c"/></svg>
<svg class="a" style="left:282px;top:136px" width="24" height="31" viewBox="0 0 24 31">
 <circle cx="12" cy="7.5" r="7" fill="#6b3a0c"/>
 <path d="M1 30.3 V21 Q1 14.5 7.5 14.5 H16.5 Q23 14.5 23 21 V30.3Z" fill="#6b3a0c"/>
 <path d="M10.6 15.8 H13.4 L12.8 17.8 L13.3 27.5 L12 28.8 L10.7 27.5 L11.2 17.8Z" fill="#ffe9c8"/>
</svg>
<svg class="a" style="left:363px;top:137px" width="32" height="30" viewBox="0 0 32 30">
 <path d="M1.5 5 L4.5 8 L10 1.5" fill="none" stroke="#6b3a0c" stroke-width="2.4"/>
 <g stroke="#6b3a0c" stroke-width="2.2"><path d="M12 3 H31 M12 6 H21 M12 13.5 H31 M12 16.5 H21 M12 24 H31 M12 27 H21"/></g>
 <circle cx="5.5" cy="15" r="2.6" fill="#6b3a0c"/><circle cx="5.5" cy="25.5" r="2.6" fill="#6b3a0c"/>
</svg>
<svg class="a" style="left:449px;top:138px" width="31" height="29" viewBox="0 0 31 29">
<path d="M1 1.2 V27.2 H29" fill="none" stroke="#6b3a0c" stroke-width="1.9"/>
<path d="M1.7 18 L14.8 5.1 L19.5 8.7 L26.5 2.8" fill="none" stroke="#6b3a0c" stroke-width="2.3"/>
<path d="M23.5 0.2 H29.8 V6.5Z" fill="#6b3a0c"/><rect x="4.3" y="19.2" width="2.2" height="7.4" fill="#b08a64" stroke="#6b3a0c" stroke-width="1.1"/><rect x="9.5" y="14.3" width="2.2" height="12.3" fill="#b08a64" stroke="#6b3a0c" stroke-width="1.1"/><rect x="14.4" y="10.3" width="2.2" height="16.3" fill="#b08a64" stroke="#6b3a0c" stroke-width="1.1"/><rect x="19.3" y="12.4" width="2.2" height="14.2" fill="#b08a64" stroke="#6b3a0c" stroke-width="1.1"/><rect x="24.3" y="9.4" width="2.2" height="17.2" fill="#b08a64" stroke="#6b3a0c" stroke-width="1.1"/></svg>
<svg class="a" style="left:534px;top:137px" width="30" height="30" viewBox="0 0 30 30">
 <circle cx="15" cy="15" r="14.7" fill="#6b3a0c"/>
 <circle cx="14.8" cy="7.6" r="2.4" fill="#fff4dc"/>
 <path d="M12 11 H17 V21.6 H18.2 V22.8 H12.2 V21.6 H13.4 V12.2 H12Z" fill="#fff4dc"/>
</svg>
<svg class="a" style="left:619px;top:137px" width="32" height="32" viewBox="0 0 32 32">
 <circle cx="16" cy="16" r="15.5" fill="#ffe4b0"/>
 <circle cx="16" cy="16" r="14.6" fill="#ef8a0c"/>
 <circle cx="15.8" cy="8.6" r="2.4" fill="#fff4dc"/>
 <path d="M13 12 H18 V22.6 H19.2 V23.8 H13.2 V22.6 H14.4 V13.2 H13Z" fill="#fff4dc"/>
</svg>
<svg class="a" style="left:704px;top:137px" width="31" height="30" viewBox="0 0 31 30">
 <rect x="10" y="2.5" width="18.5" height="16" fill="#fff"/>
 <path d="M4.2 1.2 H28 Q29.8 1.2 29.8 3 V19.9 Q29.8 21.6 28.1 21.6 H12 V18.1 H27.9 V3 H4.2Z" fill="#6b3a0c"/>
 <rect x="16.2" y="19.1" width="1.9" height="1.7" fill="#fff3dc"/>
 <rect x="14.3" y="21.6" width="5.8" height="2.4" fill="#6b3a0c"/>
 <path d="M12 26.8 L14 24 H20.4 L22.4 26.8Z" fill="#6b3a0c"/>
 <rect x="0.3" y="5.2" width="9.4" height="23.2" rx="1.6" fill="#6b3a0c" stroke="#ffeed8" stroke-width="0.6"/>
 <rect x="2" y="7.4" width="6" height="1.8" fill="#fff3dc"/><rect x="2" y="10.3" width="6" height="1.8" fill="#fff3dc"/>
 <rect x="2.3" y="20.8" width="1.9" height="1.9" fill="#fff3dc"/>
</svg>


<!-- form -->
<div class="a" style="left:174px;top:210px;width:805px;height:37px;background:#fff;border-top:1px solid #d8d8d8;border-left:1px solid #d8d8d8"></div>
<div class="a flab" style="left:184px;top:222px"><u>D</u>evizanem</div>
<div class="a combo" style="left:250px;top:218px;width:76px;height:20px"><span style="position:absolute;left:3px;top:3px">&lt;összes&gt;</span><div class="cbtn"><div class="dd" style="position:absolute;left:4px;top:6px"></div></div></div>
<div class="a flab" style="left:334px;top:222px"><u>I</u>dőszak</div>
<div class="a combo" style="left:382px;top:218px;width:66px;height:20px"><span style="position:absolute;left:2px;top:3px">2017.01.01.</span></div>
<div class="a combo" style="left:450px;top:218px;width:66px;height:20px"><span style="position:absolute;left:2px;top:3px">2017.01.31.</span></div>
<div class="a combo" style="left:518px;top:218px;width:124px;height:20px"><span style="position:absolute;left:3px;top:3px">2 - Aktuális hónap</span><div class="cbtn"><div class="dd" style="position:absolute;left:4px;top:6px"></div></div></div>
<div class="a chk" style="left:662px;top:222px"></div>
<div class="a flab" style="left:680px;top:221px"><u>E</u>lőző évi adatokkal</div>
<div class="a chk" style="left:798px;top:222px"></div>
<div class="a flab" style="left:816px;top:221px"><u>T</u>ermék/szolg. bontásban</div>
<div class="a" style="left:978px;top:210px;width:73px;height:37px;background:#f0f0f0;border-top:1px solid #fff;border-left:1px solid #fff;border-right:1px solid #646458;border-bottom:1px solid #646458;box-shadow:inset -1px -1px 0 #a0a0a0"></div>
<svg class="a" style="left:1004px;top:211px" width="20" height="20" viewBox="0 0 20 20">
 <path d="M7.8 5 A5.5 5.5 0 1 1 5.4 12.9" fill="none" stroke="#3d7c0c" stroke-width="4.4" stroke-linecap="round"/>
 <path d="M7.8 5 A5.5 5.5 0 1 1 5.4 12.9" fill="none" stroke="#74bf2a" stroke-width="2.6" stroke-linecap="round"/>
 <path d="M2.3 2.7 L9.3 7.4 L2.6 9.5Z" fill="#74bf2a" stroke="#3d7c0c" stroke-width="0.9" stroke-linejoin="round"/>
</svg>
<div class="a" style="left:984px;top:230px;font-size:12px;font-weight:bold;white-space:nowrap">Frissít (F4)</div>

<div class="a" style="left:174px;top:246px;width:875px;height:193px;background:#ffffc9;border-left:1px solid #d8d8d8"></div>
<div class="a" style="left:174px;top:441px;width:876px;height:38px;background:#fff;border:1px solid #dcdcdc;border-top-color:#d0d0d0"></div>
<div class="a fhd" style="left:182px;width:193px;top:250px">Értékesítés</div>
<div class="a btn" style="left:182px;top:271px;width:168px">Értékesítés</div>
<div class="a btn cbt" style="left:350px;top:271px;width:25px"><svg width="15" height="12" viewBox="0 0 15 12" style="position:absolute;left:4px;top:3px"><rect x="0.7" y="0.7" width="13.6" height="8.6" fill="#fffbe8" stroke="#7a4a1a" stroke-width="1.4"/><rect x="3" y="6" width="1.3" height="2" fill="#6b3a0c"/><rect x="5" y="4.5" width="1.3" height="3.5" fill="#6b3a0c"/><rect x="7" y="3" width="1.3" height="5" fill="#6b3a0c"/><circle cx="11" cy="5.5" r="2.6" fill="#fff" stroke="#7a4a1a" stroke-width="1"/><rect x="2.5" y="10.3" width="10" height="1.5" fill="#b08050"/></svg></div>
<div class="a fld" style="left:182px;top:292px;width:193px">15 441 HUF</div>
<div class="a btn" style="left:182px;top:311px;width:168px;height:21px;line-height:18px">Értékesítés fedezete</div>
<div class="a btn cbt sel" style="left:350px;top:311px;width:25px;height:21px"><div style="position:absolute;left:3px;top:3px;width:17px;height:13px;border:1px dotted #000"></div><svg width="15" height="12" viewBox="0 0 15 12" style="position:absolute;left:4px;top:3px"><rect x="0.7" y="0.7" width="13.6" height="8.6" fill="#fffbe8" stroke="#7a4a1a" stroke-width="1.4"/><rect x="3" y="6" width="1.3" height="2" fill="#6b3a0c"/><rect x="5" y="4.5" width="1.3" height="3.5" fill="#6b3a0c"/><rect x="7" y="3" width="1.3" height="5" fill="#6b3a0c"/><circle cx="11" cy="5.5" r="2.6" fill="#fff" stroke="#7a4a1a" stroke-width="1"/><rect x="2.5" y="10.3" width="10" height="1.5" fill="#b08050"/></svg></div>
<div class="a fld" style="left:182px;top:332px;width:193px">8 150 HUF</div>
<div class="a btn" style="left:182px;top:352px;width:193px">ELÁBÉ</div>
<div class="a fld" style="left:182px;top:373px;width:193px">7 292 HUF</div>
<div class="a fhd" style="left:401px;width:193px;top:250px">Jutalék</div>
<div class="a btn" style="left:401px;top:271px;width:193px">Teljes jutalék állomány</div>
<div class="a fld" style="left:401px;top:292px;width:193px">0 HUF</div>
<div class="a btn" style="left:401px;top:311px;height:21px;line-height:18px;width:193px">Elszámolható jutalék</div>
<div class="a fld" style="left:401px;top:332px;width:193px">0 HUF</div>
<div class="a btn" style="left:401px;top:352px;width:193px">Kifizetett jutalék</div>
<div class="a fld" style="left:401px;top:373px;width:193px">0 HUF</div>
<div class="a fhd" style="left:627px;width:193px;top:250px">Készlet</div>
<div class="a btn" style="left:627px;top:271px;width:193px">Raktárkészlet értéke</div>
<div class="a fld" style="left:627px;top:292px;width:193px">219 669 HUF</div>
<div class="a btn" style="left:627px;top:311px;height:21px;line-height:18px;width:193px">Bizományba adott készlet</div>
<div class="a fld" style="left:627px;top:332px;width:193px">0 HUF</div>
<div class="a btn" style="left:627px;top:352px;width:193px">Bizományba kapott készlet</div>
<div class="a fld" style="left:627px;top:373px;width:193px">0 HUF</div>
<div class="a btn" style="left:627px;top:393px;width:193px">Dolgozói készlet értéke</div>
<div class="a fld" style="left:627px;top:414px;width:193px">0 HUF</div>
<div class="a fhd" style="left:846px;width:193px;top:250px">Kereskedelem</div>
<div class="a btn" style="left:846px;top:271px;width:193px">Teljes vevői rendelési állomány</div>
<div class="a fld" style="left:846px;top:292px;width:193px">0 HUF</div>
<div class="a btn" style="left:846px;top:311px;height:21px;line-height:18px;width:193px">Kiszállítható vevői rendelések</div>
<div class="a fld" style="left:846px;top:332px;width:193px">0 HUF</div>
<div class="a btn" style="left:846px;top:352px;width:193px">Esedékes vevői rendelések</div>
<div class="a fld" style="left:846px;top:373px;width:193px">0 HUF</div>
<div class="a btn" style="left:846px;top:393px;width:193px">Számlázható szállítólevelek értéke</div>
<div class="a fld" style="left:846px;top:414px;width:193px">0 HUF</div>
<div class="a btn" style="left:402px;top:450px;width:193px">Főkönyvi kivonat</div>
<div class="a btn" style="left:626px;top:450px;width:169px">Eredmény</div>
<div class="a btn cbt" style="left:795px;top:450px;width:25px"><svg width="15" height="12" viewBox="0 0 15 12" style="position:absolute;left:4px;top:3px"><rect x="0.7" y="0.7" width="13.6" height="8.6" fill="#fffbe8" stroke="#7a4a1a" stroke-width="1.4"/><rect x="3" y="6" width="1.3" height="2" fill="#6b3a0c"/><rect x="5" y="4.5" width="1.3" height="3.5" fill="#6b3a0c"/><rect x="7" y="3" width="1.3" height="5" fill="#6b3a0c"/><circle cx="11" cy="5.5" r="2.6" fill="#fff" stroke="#7a4a1a" stroke-width="1"/><rect x="2.5" y="10.3" width="10" height="1.5" fill="#b08050"/></svg></div>
<div class="a fld" style="left:846px;top:450px;width:193px;font-weight:bold;font-size:11.5px">15 085 HUF</div>

<!-- status -->
<div class="a" id="status"></div>

<div class="a" style="left:0;top:748px;width:1366px;height:2px;background:#fff"></div>
<div class="a" style="left:0;top:750px;width:1366px;height:1px;background:#f0f0f0"></div>
<div class="a sp" style="left:0;top:752px;width:561px"></div>
<div class="a sp" style="left:563px;top:752px;width:131px">ACTUAL bemutató cég</div>
<div class="a sp" style="left:697px;top:752px;width:198px"></div>
<div class="a sp" style="left:899px;top:752px;width:197px">\ACTUAL.Kronos0001 (2.1.61) RTM</div>
<div class="a sp" style="left:1099px;top:752px;width:117px">Adminisztrátor</div>
<div class="a sp" style="left:1219px;top:752px;width:79px;text-align:center;padding-left:0">2017.01.09.</div>
<div class="a sp" style="left:1301px;top:752px;width:45px;text-align:center;padding-left:0">9:53</div>
<div class="a" style="left:0;top:766px;width:1366px;height:2px;background:#c8b89a"></div>
<div class="a" style="left:51px;top:766px;width:59px;height:2px;background:#e6e0d4;border:1px solid #a09070;border-bottom:0"></div>
<div class="a" style="left:113px;top:766px;width:59px;height:2px;background:#e6e0d4;border:1px solid #a09070;border-bottom:0"></div>
<div class="a" style="left:175px;top:766px;width:60px;height:2px;background:#fff;border:1px solid #a09070;border-bottom:0"></div>
</body></html>
